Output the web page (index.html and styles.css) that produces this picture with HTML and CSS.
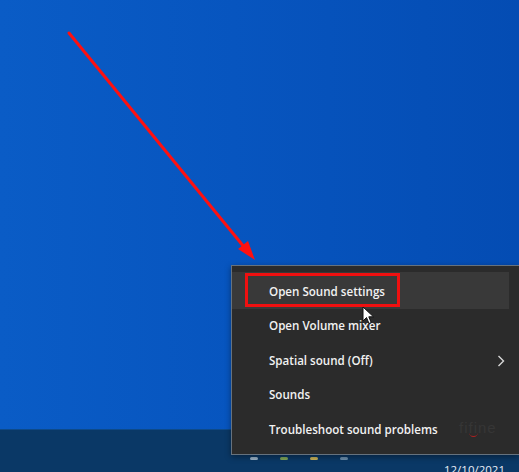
FILE: index.html
```html
<!DOCTYPE html>
<html>
<head>
<meta charset="utf-8">
<link rel="stylesheet" href="styles.css">
</head>
<body>
<div class="screen">
  <div class="desktop"></div>
  <div class="taskbar">
    <div class="tray-icons">
      <span class="ti ti-a"></span>
      <span class="ti ti-b"></span>
      <span class="ti ti-c"></span>
      <span class="ti ti-d"></span>
    </div>
    <div class="clock">12/10/2021</div>
  </div>

  <svg class="annot-arrow" width="519" height="472" viewBox="0 0 519 472">
    <line x1="69" y1="33" x2="249" y2="253" stroke="#ff1010" stroke-width="3" stroke-linecap="round"/>
    <polygon points="255,260 238,249 248,241" fill="#ff1010"/>
  </svg>

  <div class="menu">
    <div class="item active">Open Sound settings</div>
    <div class="item">Open Volume mixer</div>
    <div class="item has-sub">Spatial sound (Off)
      <svg class="chev" width="8" height="12" viewBox="0 0 8 12"><path d="M1.5 1 L6.5 6 L1.5 11" fill="none" stroke="#d8d8d8" stroke-width="1.4"/></svg>
    </div>
    <div class="item">Sounds</div>
    <div class="item">Troubleshoot sound problems</div>
    <div class="redbox"></div>
    <div class="watermark">fi<span class="smile">fi</span>ne</div>
  </div>

  <svg class="cursor" width="14" height="20" viewBox="0 0 14 20">
    <path d="M1 1 L1 15 L4.5 11.5 L7 17.5 L9.2 16.5 L6.8 10.8 L11.5 10.8 Z" fill="#fff" stroke="#111" stroke-width="1"/>
  </svg>
</div>
</body>
</html>
```
FILE: styles.css
```css
html, body {
  margin: 0;
  padding: 0;
  width: 519px;
  height: 472px;
  overflow: hidden;
}
.screen {
  position: relative;
  width: 519px;
  height: 472px;
  display: flex;
  flex-direction: column;
  font-family: "Open Sans", "Noto Sans", "Liberation Sans", sans-serif;
}
.desktop {
  height: 429px;
  background: linear-gradient(90deg, #0a5cc6 0%, #0755bf 45%, #044cb3 100%);
}
.taskbar {
  flex: 1;
  background: #0a3866;
  border-top: 1px solid #0d4a8a;
  display: flex;
  align-items: flex-end;
  justify-content: space-between;
  padding: 0 0 0 250px;
}
.tray-icons {
  display: flex;
  gap: 22px;
  padding-bottom: 12px;
}
.ti {
  width: 8px;
  height: 3px;
  border-radius: 2px;
  background: #9ab3c8;
}
.ti-b { background: #7fa65a; }
.ti-c { background: #c8b35a; }
.ti-d { background: #6b8fae; }
.clock {
  color: #e8eef6;
  font-size: 11.5px;
  margin-right: 14px;
  margin-bottom: -5px;
}
.annot-arrow {
  position: absolute;
  left: 0;
  top: 0;
}
.menu {
  position: absolute;
  left: 231px;
  top: 265px;
  width: 288px;
  height: 190px;
  box-sizing: border-box;
  background: #2b2b2b;
  border: 1px solid #66727e;
  border-right: none;
  padding: 9px 10px 0 0;
  display: flex;
  flex-direction: column;
  box-shadow: 0 2px 6px rgba(0,0,0,0.4);
}
.item {
  position: relative;
  height: 34.5px;
  line-height: 34.5px;
  padding-left: 37px;
  color: #f2f2f2;
  font-size: 11.6px;
  font-weight: 600;
  white-space: nowrap;
}
.item.active {
  background: #393939;
  margin-top: -3px;
  height: 37px;
  line-height: 40px;
}
.chev {
  position: absolute;
  right: 4px;
  top: 11px;
}
.redbox {
  position: absolute;
  left: 13px;
  top: 7px;
  width: 155px;
  height: 34px;
  box-sizing: border-box;
  border: 3px solid #f01010;
}
.watermark {
  position: absolute;
  left: 227px;
  top: 153px;
  font-size: 15px;
  color: #363636;
  font-family: "Liberation Sans", sans-serif;
  letter-spacing: 1px;
}
.smile {
  color: #363636;
  border-bottom: 1px solid #b02020;
  border-radius: 0 0 6px 6px;
}
.cursor {
  position: absolute;
  left: 362px;
  top: 306px;
}
```
